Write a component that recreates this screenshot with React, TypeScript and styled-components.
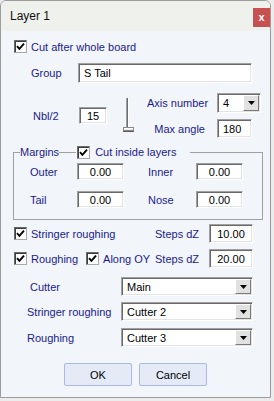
import styled, { createGlobalStyle } from 'styled-components';

const GlobalStyle = createGlobalStyle`
  body {
    margin: 0;
    background: #ececec;
    font-family: "Liberation Sans", Arial, sans-serif;
  }
`;

const Window = styled.div`
  width: 271px;
  height: 398px;
  box-sizing: border-box;
  border: 1px solid #9c9c9c;
  border-radius: 6px 6px 0 0;
  background: #f2f6fb;
  display: flex;
  flex-direction: column;
  overflow: hidden;
`;

const TitleBar = styled.div`
  height: 30px;
  flex: none;
  background: #eef1ec;
  display: flex;
  justify-content: space-between;
  align-items: flex-start;
  padding-left: 9px;
`;

const Title = styled.span`
  line-height: 31px;
  font-size: 12px;
  color: #111;
`;

const CloseButton = styled.div`
  width: 17px;
  height: 19px;
  margin-top: 7px;
  background: #c75050;
  color: #fff;
  font-size: 11px;
  font-weight: bold;
  display: flex;
  align-items: center;
  justify-content: center;
  padding-bottom: 1px;
  box-sizing: border-box;
`;

const Body = styled.div`
  display: flex;
  flex-direction: column;
`;

const Label = styled.span<{ $w?: number; $right?: boolean; $indent?: number }>`
  font-size: 11px;
  color: #1a1a8c;
  white-space: nowrap;
  ${({ $w }) => ($w ? `width: ${$w}px; flex: none;` : '')}
  ${({ $right }) => ($right ? 'text-align: right;' : '')}
  ${({ $indent }) => ($indent ? `padding-left: ${$indent}px; box-sizing: border-box;` : '')}
`;

const sunken = `
  box-sizing: border-box;
  background: #fff;
  border: 1px solid;
  border-color: #a0a0a0 #fff #fff #a0a0a0;
  box-shadow: inset 1px 1px 0 #696969, inset -1px -1px 0 #e3e3e3;
`;

const Edit = styled.div<{ $w: number; $h?: number; $center?: boolean }>`
  ${sunken}
  width: ${({ $w }) => $w}px;
  height: ${({ $h }) => $h ?? 19}px;
  flex: none;
  display: flex;
  align-items: center;
  justify-content: ${({ $center }) => ($center ? 'center' : 'flex-start')};
  padding: 0 5px;
  font-size: 11px;
  color: #000;
`;

const ComboBox = styled.div<{ $w: number; $h?: number }>`
  ${sunken}
  width: ${({ $w }) => $w}px;
  height: ${({ $h }) => $h ?? 19}px;
  flex: none;
  display: flex;
  align-items: center;
  justify-content: space-between;
  padding-left: 5px;
  font-size: 11px;
  color: #000;
`;

const DropButton = styled.span`
  width: 16px;
  height: calc(100% - 2px);
  margin-right: 1px;
  box-sizing: border-box;
  background: #e1e1e1;
  border: 1px solid;
  border-color: #fff #7a7a7a #7a7a7a #fff;
  display: flex;
  align-items: center;
  justify-content: center;
`;

const Box = styled.span`
  width: 13px;
  height: 13px;
  flex: none;
  box-sizing: border-box;
  background: #fff;
  border: 1px solid;
  border-color: #6a6a6a #a8a8a8 #a8a8a8 #6a6a6a;
  box-shadow: inset 1px 1px 0 #3c3c3c;
  display: flex;
  align-items: center;
  justify-content: center;
`;

const CheckLine = styled.div<{ $top: number }>`
  margin-top: ${({ $top }) => $top}px;
  height: 17px;
  padding-left: 13px;
  display: flex;
  align-items: center;
  gap: 4px;
`;

const FieldRow = styled.div<{ $top: number }>`
  margin-top: ${({ $top }) => $top}px;
  padding-left: 30px;
  display: flex;
  align-items: center;
`;

const NblBlock = styled.div`
  margin-top: 10px;
  height: 45px;
  padding-left: 32px;
  display: flex;
  align-items: center;
`;

const SliderBox = styled.div`
  width: 12px;
  height: 36px;
  margin-left: 15px;
  align-self: flex-start;
  margin-top: 3px;
`;

const RightCol = styled.div`
  margin-left: 13px;
  display: grid;
  grid-template-columns: 58px auto;
  grid-template-rows: 20px 19px;
  column-gap: 12px;
  row-gap: 6px;
  align-items: center;
`;

const Frame = styled.fieldset`
  margin: 7px 0 0 12px;
  width: 250px;
  box-sizing: border-box;
  border: 1px solid #a0a0a0;
  padding: 0;
  min-width: 0;
`;

const Legend = styled.legend`
  margin-left: 6px;
  padding: 0 14px 0 0;
  height: 14px;
  display: flex;
  align-items: center;
`;

const Dash = styled.span`
  width: 17px;
  height: 1px;
  background: #a0a0a0;
  margin-right: 1px;
`;

const LegendCheck = styled.span`
  display: flex;
  align-items: center;
  gap: 5px;
`;

const FrameGrid = styled.div`
  padding: 4px 0 11px 16px;
  display: grid;
  grid-template-columns: 47px 47px 24px 48px 47px;
  grid-auto-rows: 17px;
  row-gap: 11px;
  align-items: center;
`;

const OptionRow = styled.div<{ $top: number }>`
  margin-top: ${({ $top }) => $top}px;
  height: 19px;
  padding-left: 13px;
  display: grid;
  grid-template-columns: 141px 54px 44px;
  align-items: center;
`;

const CheckGroup = styled.span<{ $gapBefore?: number }>`
  display: flex;
  align-items: center;
  gap: 4px;
  ${({ $gapBefore }) => ($gapBefore ? `margin-left: ${$gapBefore}px;` : '')}
`;

const ChecksCell = styled.span`
  display: flex;
  align-items: center;
`;

const ComboRow = styled.div<{ $top: number }>`
  margin-top: ${({ $top }) => $top}px;
  padding-left: 26px;
  display: flex;
  align-items: center;
`;

const ButtonRow = styled.div`
  margin-top: 16px;
  padding-left: 63px;
  display: flex;
  gap: 7px;
`;

const Button = styled.div`
  width: 68px;
  height: 23px;
  box-sizing: border-box;
  background: #e4ebf7;
  border: 1px solid #a9b9e3;
  border-radius: 2px;
  font-size: 11px;
  color: #000;
  display: flex;
  align-items: center;
  justify-content: center;
`;

const Check = () => (
  <Box>
    <svg width="9" height="9" viewBox="0 0 9 9">
      <path d="M1 4.2 L3.4 6.8 L8 1.6" fill="none" stroke="#000" strokeWidth="1.9" />
    </svg>
  </Box>
);

const Arrow = () => (
  <svg width="7" height="4" viewBox="0 0 7 4">
    <polygon points="0,0 7,0 3.5,4" fill="#000" />
  </svg>
);

const Combo = ({ w, h, value }: { w: number; h?: number; value: string }) => (
  <ComboBox $w={w} $h={h}>
    {value}
    <DropButton>
      <Arrow />
    </DropButton>
  </ComboBox>
);

// vertical trackbar, thumb sitting at the bottom
const Slider = () => (
  <SliderBox>
    <svg width="12" height="36" viewBox="0 0 12 36">
      <line x1="4.5" y1="2" x2="4.5" y2="31" stroke="#a0a0a0" />
      <line x1="5.5" y1="2" x2="5.5" y2="31" stroke="#6e6e6e" />
      <line x1="6.5" y1="2" x2="6.5" y2="31" stroke="#ffffff" />
      <rect x="1.5" y="31.5" width="10" height="3" fill="#e8e8e8" stroke="#8a8a8a" />
      <line x1="2" y1="32.5" x2="11" y2="32.5" stroke="#fff" />
      <line x1="1" y1="35.5" x2="12" y2="35.5" stroke="#5a5a5a" />
    </svg>
  </SliderBox>
);

const App = () => (
  <>
    <GlobalStyle />
    <Window>
      <TitleBar>
        <Title>Layer 1</Title>
        <CloseButton>x</CloseButton>
      </TitleBar>
      <Body>
        <CheckLine $top={7}>
          <Check />
          <Label>Cut after whole board</Label>
        </CheckLine>

        <FieldRow $top={8}>
          <Label $w={47}>Group</Label>
          <Edit $w={174} $h={20}>S Tail</Edit>
        </FieldRow>

        <NblBlock>
          <Label $w={46}>Nbl/2</Label>
          <Edit $w={28} $h={17} $center>15</Edit>
          <Slider />
          <RightCol>
            <Label $right>Axis number</Label>
            <Combo w={44} h={20} value="4" />
            <Label $right>Max angle</Label>
            <Edit $w={35}>180</Edit>
          </RightCol>
        </NblBlock>

        <Frame>
          <Legend>
            <Label>Margins</Label>
            <Dash />
            <LegendCheck>
              <Check />
              <Label>Cut inside layers</Label>
            </LegendCheck>
          </Legend>
          <FrameGrid>
            <Label>Outer</Label>
            <Edit $w={47} $h={17} $center>0.00</Edit>
            <span />
            <Label>Inner</Label>
            <Edit $w={47} $h={17} $center>0.00</Edit>
            <Label>Tail</Label>
            <Edit $w={47} $h={17} $center>0.00</Edit>
            <span />
            <Label>Nose</Label>
            <Edit $w={47} $h={17} $center>0.00</Edit>
          </FrameGrid>
        </Frame>

        <OptionRow $top={4}>
          <CheckGroup>
            <Check />
            <Label>Stringer roughing</Label>
          </CheckGroup>
          <Label>Steps dZ</Label>
          <Edit $w={44} $center>10.00</Edit>
        </OptionRow>

        <OptionRow $top={6}>
          <ChecksCell>
            <CheckGroup>
              <Check />
              <Label>Roughing</Label>
            </CheckGroup>
            <CheckGroup $gapBefore={8}>
              <Check />
              <Label>Along OY</Label>
            </CheckGroup>
          </ChecksCell>
          <Label>Steps dZ</Label>
          <Edit $w={44} $center>20.00</Edit>
        </OptionRow>

        <ComboRow $top={9}>
          <Label $w={94} $indent={3}>Cutter</Label>
          <Combo w={132} value="Main" />
        </ComboRow>
        <ComboRow $top={6}>
          <Label $w={94}>Stringer roughing</Label>
          <Combo w={132} value="Cutter 2" />
        </ComboRow>
        <ComboRow $top={7}>
          <Label $w={94}>Roughing</Label>
          <Combo w={132} value="Cutter 3" />
        </ComboRow>

        <ButtonRow>
          <Button>OK</Button>
          <Button>Cancel</Button>
        </ButtonRow>
      </Body>
    </Window>
  </>
);

export default App;
